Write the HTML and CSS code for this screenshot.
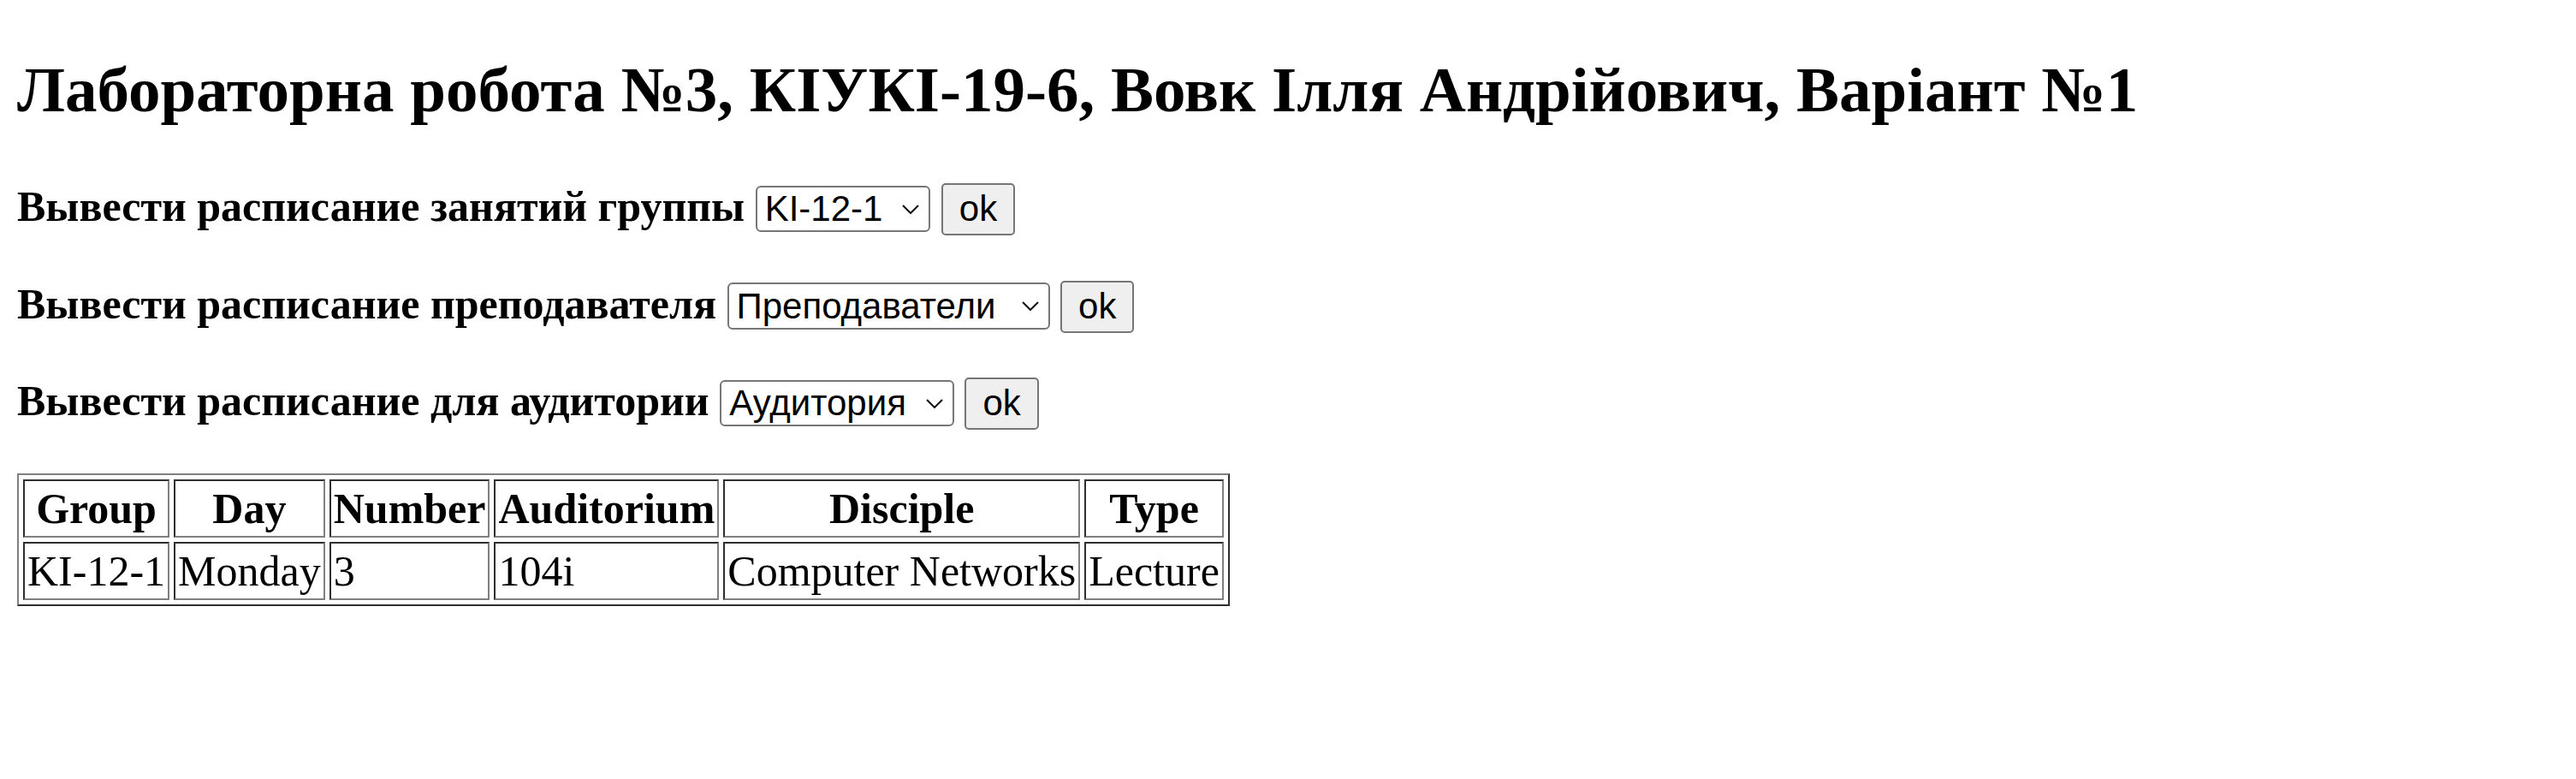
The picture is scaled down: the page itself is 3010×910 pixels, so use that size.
FILE: index.html
```html
<!DOCTYPE html>
<html lang="uk">
<head>
<meta charset="utf-8">
<title>Лабораторна робота №3</title>
<link rel="stylesheet" href="styles.css">
</head>
<body>
<h2 class="title">Лабораторна робота №3, КІУКІ-19-6, Вовк Ілля Андрійович, Варіант №1</h2>

<form class="row"><label class="label">Вывести расписание занятий группы</label> <span class="select"><span class="select-text">KI-12-1</span><svg class="chevron" width="20" height="11" viewBox="0 0 20 11"><polyline points="1,1 10,10 19,1" fill="none" stroke="#111" stroke-width="2"/></svg></span> <button class="ok" type="button">ok</button></form>

<form class="row"><label class="label">Вывести расписание преподавателя</label> <span class="select select-wide"><span class="select-text">Преподаватели</span><svg class="chevron" width="20" height="11" viewBox="0 0 20 11"><polyline points="1,1 10,10 19,1" fill="none" stroke="#111" stroke-width="2"/></svg></span> <button class="ok" type="button">ok</button></form>

<form class="row"><label class="label">Вывести расписание для аудитории</label> <span class="select"><span class="select-text">Аудитория</span><svg class="chevron" width="20" height="11" viewBox="0 0 20 11"><polyline points="1,1 10,10 19,1" fill="none" stroke="#111" stroke-width="2"/></svg></span> <button class="ok" type="button">ok</button></form>

<table class="schedule">
<tr><th>Group</th><th>Day</th><th>Number</th><th>Auditorium</th><th>Disciple</th><th>Type</th></tr>
<tr><td>KI-12-1</td><td>Monday</td><td>3</td><td>104i</td><td>Computer Networks</td><td>Lecture</td></tr>
</table>
</body>
</html>
```
FILE: styles.css
```css
html { background: #fff; }
body {
  margin: 0;
  padding: 0 20px 20px;
  font-family: "Liberation Serif", "Times New Roman", serif;
  font-size: 50px;
  color: #000;
}
.title {
  font-size: 75px;
  font-weight: bold;
  margin: 62px 0 64px;
  white-space: nowrap;
}
.row {
  margin: 50.5px 0;
  white-space: nowrap;
}
.label {
  font-weight: bold;
}
.select {
  display: inline-flex;
  align-items: baseline;
  font-family: "Liberation Sans", Arial, sans-serif;
  font-size: 42px;
  line-height: normal;
  padding: 1.3px 11px 1.4px 9px;
  border: 2px solid #767676;
  border-radius: 6px;
  background: #fff;
}
.select-wide {
  box-sizing: border-box;
  width: 377px;
}
.chevron {
  align-self: center;
  margin-left: auto;
  padding-left: 23px;
  box-sizing: content-box;
}
.ok {
  font-family: "Liberation Sans", Arial, sans-serif;
  font-size: 42px;
  line-height: normal;
  padding: 4px 19px 5px;
  margin: 0;
  border: 2px solid #767676;
  border-radius: 5px;
  background: #efefef;
  color: #000;
}
.schedule {
  margin-top: 50.5px;
  border-collapse: separate;
  border-spacing: 5px;
  border: 2px solid;
  border-color: #808080 #2e2e2e #2e2e2e #808080;
}
.schedule th,
.schedule td {
  padding: 3px;
  border: 2px solid;
  border-color: #2e2e2e #808080 #808080 #2e2e2e;
  white-space: nowrap;
}
.schedule th {
  font-weight: bold;
  text-align: center;
}
.schedule td {
  text-align: left;
}
```
